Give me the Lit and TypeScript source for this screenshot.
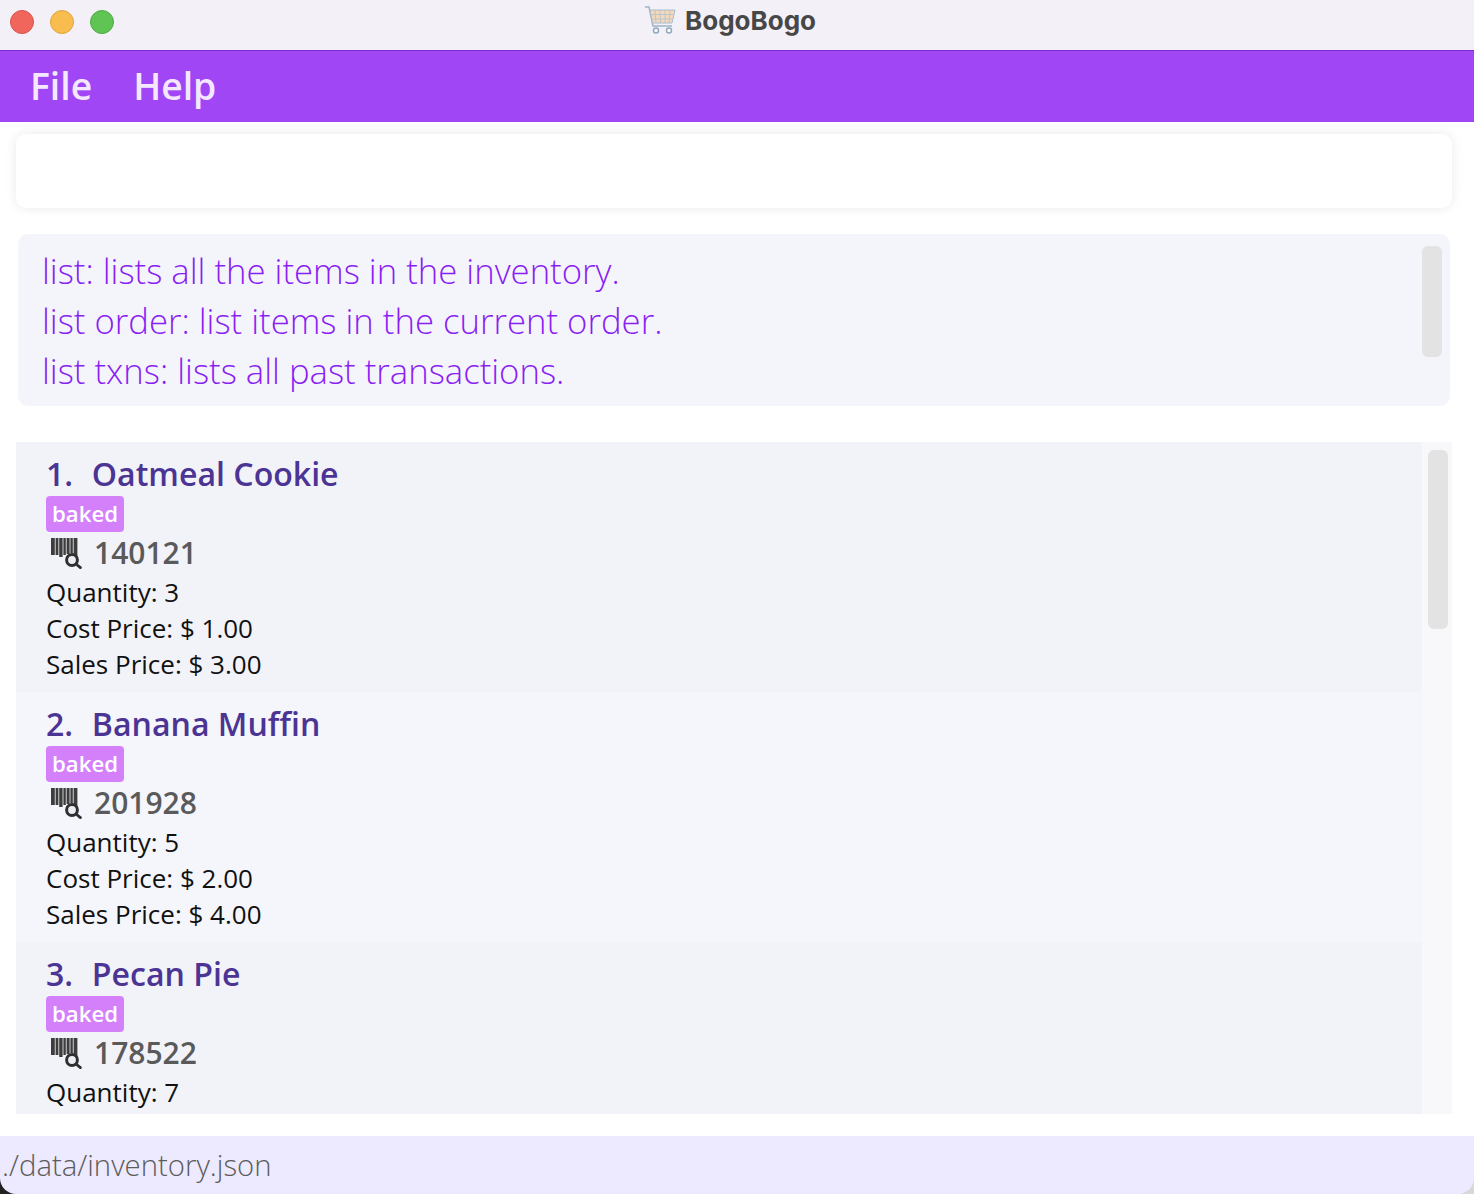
import { LitElement, html, css, svg } from "lit";
import { customElement } from "lit/decorators.js";

const items: { n: number; name: string; code: string; qty: number; cost?: string; sale?: string }[] = [
  { n: 1, name: "Oatmeal Cookie", code: "140121", qty: 3, cost: "1.00", sale: "3.00" },
  { n: 2, name: "Banana Muffin", code: "201928", qty: 5, cost: "2.00", sale: "4.00" },
  { n: 3, name: "Pecan Pie", code: "178522", qty: 7 },
];

const barcode = html`<svg class="bc" width="34" height="34" viewBox="0 0 34 34" aria-hidden="true">
  <g fill="#3d3d3d">
    <rect x="3" y="2" width="3.8" height="17"/><rect x="7.6" y="2" width="2.8" height="17"/>
    <rect x="11.2" y="2" width="3.4" height="19"/><rect x="15.4" y="2" width="2.4" height="17"/>
    <rect x="18.6" y="2" width="3" height="16"/><rect x="22.4" y="2" width="2.4" height="15"/>
    <rect x="25.6" y="2" width="3.8" height="20"/>
  </g>
  <circle cx="24" cy="24" r="5.4" fill="#eceef3" stroke="#2f2f2f" stroke-width="3"/>
  <path d="M28 28 L32.4 31.6" stroke="#2f2f2f" stroke-width="2.8" stroke-linecap="round"/>
</svg>`;

const cart = svg`<svg class="cart" width="33" height="30" viewBox="0 0 33 30" aria-hidden="true">
  <path d="M1 2 H5 L9 21 H28" fill="none" stroke="#9db4c6" stroke-width="1.5"/>
  <path d="M6 5 H31 L28 18 H8.5 Z" fill="#f5d9b8" stroke="#a9bccb" stroke-width="1"/>
  <path d="M11 5 L12 18 M16 5 L16.5 18 M21 5 L21 18 M26 5 L25 18 M7 9.5 H30 M8 14 H29" stroke="#b9c6d2" stroke-width="1"/>
  <circle cx="12" cy="25.5" r="2.5" fill="#fff" stroke="#8fa9bd" stroke-width="1.5"/>
  <circle cx="25" cy="25.5" r="2.5" fill="#fff" stroke="#8fa9bd" stroke-width="1.5"/>
</svg>`;

@customElement("app-root")
export class AppRoot extends LitElement {
  static styles = css`
    :host { display: flex; flex-direction: column; width: 1474px; height: 1194px; background: #fff; font-family: "Open Sans", "Noto Sans", sans-serif; overflow: hidden; }
    .title { height: 50px; flex: none; background: #f3f0f8; display: flex; align-items: center; position: relative; padding: 0 0 6px 10px; gap: 16px; box-sizing: border-box; }
    .dot { width: 24px; height: 24px; border-radius: 50%; box-sizing: border-box; border: 1px solid; }
    .red { background: #f1665c; border-color: #d9534a; }
    .yellow { background: #f8bd4e; border-color: #dfa53e; }
    .green { background: #5fc454; border-color: #50ab46; }
    .name { position: absolute; left: 644px; top: 5px; display: flex; align-items: center; gap: 8px; height: 30px; font: 700 26px/32px Inter, "Open Sans", sans-serif; color: #474747; }
    .name span { margin-top: 2px; }
    .menu { height: 72px; flex: none; background: #a146f5; border-top: 1px solid #7a2bd0; box-sizing: border-box; display: flex; align-items: center; padding: 0 0 2px 30px; gap: 41px; color: #f3e8ff; font-size: 37.3px; font-weight: 600; }
    .cmd { margin: 12px 22px 0 16px; height: 74px; flex: none; background: #fff; border-radius: 10px; box-shadow: 0 0 12px rgba(0,0,0,.09); }
    .result { margin: 26px 24px 0 18px; height: 172px; flex: none; background: #f4f5fa; border-radius: 10px; display: flex; justify-content: space-between; padding: 12px 8px 0 24px; box-sizing: border-box; }
    .result p { margin: 0; font-size: 34.7px; font-weight: 300; line-height: 50px; color: #8a1ff2; }
    .rbar { width: 20px; height: 111px; background: #e3e3e3; border-radius: 6px; }
    .listbox { margin: 36px 22px 0 16px; height: 672px; flex: none; display: flex; overflow: hidden; }
    .rows { flex: 1; min-width: 0; }
    .row { height: 250px; box-sizing: border-box; padding: 11px 0 0 30px; background: #f2f3f8; }
    .row:nth-child(even) { background: #f5f6fb; }
    .head { font-size: 32.1px; line-height: 41px; height: 41px; font-weight: 600; color: #4c3494; white-space: pre; }
    .head b { font-weight: 600; margin-left: 2px; }
    .tag { display: inline-block; margin-top: 2px; height: 36px; line-height: 35px; padding: 0 6px; background: #d480fb; color: #fff; border-radius: 4px; font-size: 22.2px; font-weight: 600; vertical-align: top; }
    .tagrow { height: 38px; }
    .code { display: flex; align-items: center; height: 42px; font-size: 30px; line-height: 40px; font-weight: 600; color: #5a5a5a; gap: 12px; padding-left: 2px; }
    .bc { flex: none; margin-top: 0; filter: blur(.5px); }
    .line { font-size: 26px; line-height: 36px; color: #111; height: 36px; }
    .track { width: 30px; flex: none; background: #f8f8fb; padding: 8px 4px 0 6px; box-sizing: border-box; }
    .thumb { height: 179px; background: #e3e3e3; border-radius: 6px; }
    .foot { margin-top: 22px; flex: none; background: linear-gradient(90deg, #222 50%, #d8d8d8 50%); }
    .status { height: 58px; background: #ede9fe; border-radius: 0 0 16px 16px; box-sizing: border-box; padding-left: 2px; font-size: 29.3px; font-weight: 300; line-height: 58px; color: #5c5c5c; }
  `;

  render() {
    return html`
      <div class="title">
        <span class="dot red"></span><span class="dot yellow"></span><span class="dot green"></span>
        <div class="name">${cart}<span>BogoBogo</span></div>
      </div>
      <div class="menu"><span>File</span><span>Help</span></div>
      <div class="cmd"></div>
      <div class="result">
        <div>
          <p>list: lists all the items in the inventory.</p>
          <p>list order: list items in the current order.</p>
          <p>list txns: lists all past transactions.</p>
        </div>
        <div class="rbar"></div>
      </div>
      <div class="listbox">
        <div class="rows">
          ${items.map((i) => html`<div class="row">
            <div class="head">${i.n}.  <b>${i.name}</b></div>
            <div class="tagrow"><span class="tag">baked</span></div>
            <div class="code">${barcode}<span>${i.code}</span></div>
            <div class="line">Quantity: ${i.qty}</div>
            ${i.cost ? html`<div class="line">Cost Price: $ ${i.cost}</div>` : ""}
            ${i.sale ? html`<div class="line">Sales Price: $ ${i.sale}</div>` : ""}
          </div>`)}
        </div>
        <div class="track"><div class="thumb"></div></div>
      </div>
      <div class="foot"><div class="status">./data/inventory.json</div></div>
    `;
  }
}
